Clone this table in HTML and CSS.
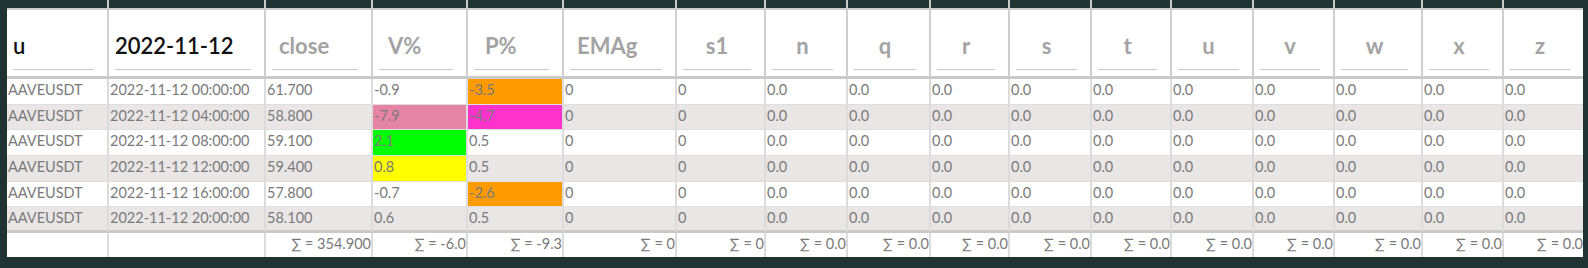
FILE: index.html
```html
<!DOCTYPE html>
<html>
<head>
<meta charset="utf-8">
<link rel="stylesheet" href="styles.css">
</head>
<body>
<div class="frame">
<table class="grid">
<colgroup>
<col class="w102"><col class="w157"><col class="w107"><col class="w95"><col class="w96"><col class="w113"><col class="w89">
<col class="w82"><col class="w83"><col class="w79"><col class="w82"><col class="w80"><col class="w82"><col class="w81"><col class="w88"><col class="w81"><col class="w81">
</colgroup>
<thead>
<tr class="ghost"><th></th><th></th><th></th><th></th><th></th><th></th><th></th><th></th><th></th><th></th><th></th><th></th><th></th><th></th><th></th><th></th><th></th></tr>
<tr class="head">
<th><div class="filter val">u</div></th>
<th><div class="filter val">2022-11-12</div></th>
<th><div class="filter ph left">close</div></th>
<th><div class="filter ph left l2">V%</div></th>
<th><div class="filter ph left l3">P%</div></th>
<th><div class="filter ph left">EMAg</div></th>
<th><div class="filter ph">s1</div></th>
<th><div class="filter ph">n</div></th>
<th><div class="filter ph">q</div></th>
<th><div class="filter ph">r</div></th>
<th><div class="filter ph">s</div></th>
<th><div class="filter ph">t</div></th>
<th><div class="filter ph">u</div></th>
<th><div class="filter ph">v</div></th>
<th><div class="filter ph">w</div></th>
<th><div class="filter ph">x</div></th>
<th><div class="filter ph">z</div></th>
</tr>
</thead>
<tbody>
<tr><td>AAVEUSDT</td><td>2022-11-12 00:00:00</td><td>61.700</td><td>-0.9</td><td class="orange">-3.5</td><td>0</td><td>0</td><td>0.0</td><td>0.0</td><td>0.0</td><td>0.0</td><td>0.0</td><td>0.0</td><td>0.0</td><td>0.0</td><td>0.0</td><td>0.0</td></tr>
<tr class="alt"><td>AAVEUSDT</td><td>2022-11-12 04:00:00</td><td>58.800</td><td class="pink">-7.9</td><td class="magenta">-4.7</td><td>0</td><td>0</td><td>0.0</td><td>0.0</td><td>0.0</td><td>0.0</td><td>0.0</td><td>0.0</td><td>0.0</td><td>0.0</td><td>0.0</td><td>0.0</td></tr>
<tr><td>AAVEUSDT</td><td>2022-11-12 08:00:00</td><td>59.100</td><td class="green">2.1</td><td>0.5</td><td>0</td><td>0</td><td>0.0</td><td>0.0</td><td>0.0</td><td>0.0</td><td>0.0</td><td>0.0</td><td>0.0</td><td>0.0</td><td>0.0</td><td>0.0</td></tr>
<tr class="alt"><td>AAVEUSDT</td><td>2022-11-12 12:00:00</td><td>59.400</td><td class="yellow">0.8</td><td>0.5</td><td>0</td><td>0</td><td>0.0</td><td>0.0</td><td>0.0</td><td>0.0</td><td>0.0</td><td>0.0</td><td>0.0</td><td>0.0</td><td>0.0</td><td>0.0</td></tr>
<tr><td>AAVEUSDT</td><td>2022-11-12 16:00:00</td><td>57.800</td><td>-0.7</td><td class="orange">-2.6</td><td>0</td><td>0</td><td>0.0</td><td>0.0</td><td>0.0</td><td>0.0</td><td>0.0</td><td>0.0</td><td>0.0</td><td>0.0</td><td>0.0</td><td>0.0</td></tr>
<tr class="alt last"><td>AAVEUSDT</td><td>2022-11-12 20:00:00</td><td>58.100</td><td>0.6</td><td>0.5</td><td>0</td><td>0</td><td>0.0</td><td>0.0</td><td>0.0</td><td>0.0</td><td>0.0</td><td>0.0</td><td>0.0</td><td>0.0</td><td>0.0</td><td>0.0</td></tr>
</tbody>
<tfoot>
<tr><td></td><td></td><td>∑ = 354.900</td><td>∑ = -6.0</td><td>∑ = -9.3</td><td>∑ = 0</td><td>∑ = 0</td><td>∑ = 0.0</td><td>∑ = 0.0</td><td>∑ = 0.0</td><td>∑ = 0.0</td><td>∑ = 0.0</td><td>∑ = 0.0</td><td>∑ = 0.0</td><td>∑ = 0.0</td><td>∑ = 0.0</td><td>∑ = 0.0</td></tr>
</tfoot>
</table>
</div>
</body>
</html>
```

FILE: styles.css
```css
html, body {
  margin: 0;
  padding: 0;
  background: #1f3333;
  width: 1588px;
  height: 268px;
  overflow: hidden;
}

.frame {
  margin-left: 7px;
  width: 1576px;
  height: 260px;
  overflow: hidden;
}

.grid {
  table-layout: fixed;
  border-collapse: separate;
  border-spacing: 0;
  width: 1576px;
  font-family: "Lato", "Liberation Sans", sans-serif;
}

.w102 { width: 102px; }
.w157 { width: 157px; }
.w107 { width: 107px; }
.w95 { width: 95px; }
.w96 { width: 96px; }
.w113 { width: 113px; }
.w89 { width: 89px; }
.w82 { width: 82px; }
.w83 { width: 83px; }
.w79 { width: 79px; }
.w80 { width: 80px; }
.w81 { width: 81px; }
.w88 { width: 88px; }

.ghost th {
  height: 8px;
  padding: 0;
  border-right: 2px solid #c9c9c9;
}

.head th {
  height: 60px;
  padding: 0 13px 6px 6px;
  background: #fff;
  border-top: 2px solid #cacaca;
  border-right: 2px solid #cfcfcf;
  border-bottom: 3px solid #cacaca;
  vertical-align: bottom;
  box-sizing: content-box;
}

.filter {
  border-bottom: 1px solid #c8c8c8;
  font-size: 22px;
  line-height: 28px;
  padding-bottom: 9px;
  white-space: nowrap;
  overflow: hidden;
}

.filter.val {
  color: #111;
  font-weight: 600;
  text-align: left;
}

.filter.ph {
  color: #a3a3a3;
  font-weight: 700;
  text-align: center;
}

.filter.ph.left {
  text-align: left;
  padding-left: 7px;
}

.filter.ph.l2 { padding-left: 9px; }
.filter.ph.l3 { padding-left: 11px; }

tbody td {
  height: 25.67px;
  padding: 1px 0 0 1px;
  box-sizing: border-box;
  font-size: 14.5px;
  line-height: 20px;
  font-weight: 400;
  color: #7a7a7a;
  background: #fff;
  border-right: 2px solid #dcdcdc;
  border-bottom: 1px solid #dedede;
  vertical-align: top;
  white-space: nowrap;
  overflow: hidden;
}

tbody tr.alt td {
  background: #e9e6e5;
}

tbody tr.last td {
  border-bottom: 3px solid #c9c9c9;
}

tbody td.orange, tbody tr.alt td.orange { background: #ff9a00; }
tbody td.pink, tbody tr.alt td.pink { background: #e684a6; }
tbody td.magenta, tbody tr.alt td.magenta { background: #ff33cc; }
tbody td.green, tbody tr.alt td.green { background: #00ff00; }
tbody td.yellow, tbody tr.alt td.yellow { background: #ffff00; }

tfoot td {
  height: 24px;
  padding: 1px 0 0 0;
  box-sizing: border-box;
  font-size: 14.5px;
  line-height: 20px;
  font-weight: 400;
  color: #7a7a7a;
  background: #fff;
  border-right: 2px solid #dcdcdc;
  text-align: right;
  vertical-align: top;
  white-space: nowrap;
  overflow: hidden;
}
```
